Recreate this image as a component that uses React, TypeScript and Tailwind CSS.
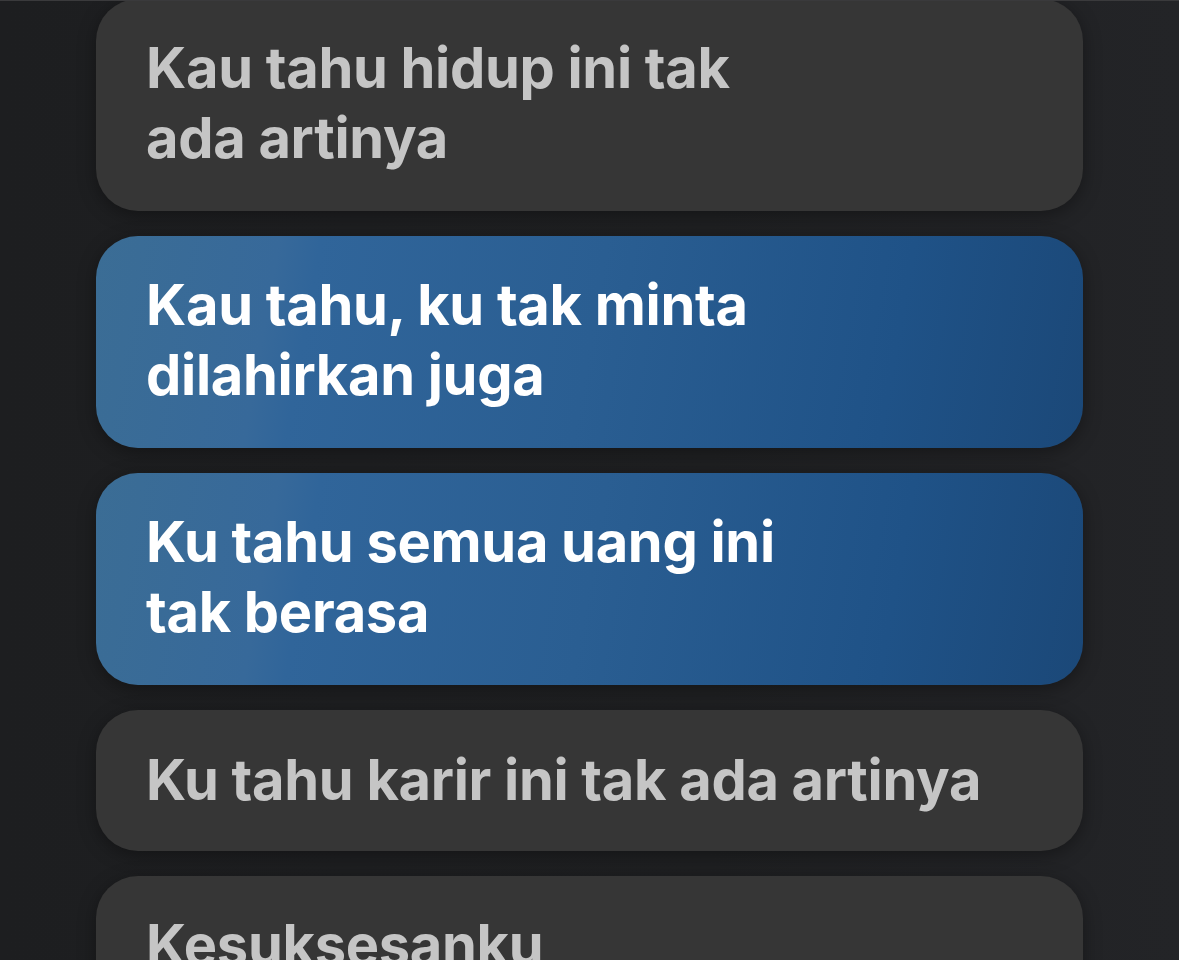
import React from 'react'

type Line = {
  lines: string[]
  active?: boolean
}

const lyrics: Line[] = [
  { lines: ['Kau tahu hidup ini tak', 'ada artinya'] },
  { lines: ['Kau tahu, ku tak minta', 'dilahirkan juga'], active: true },
  { lines: ['Ku tahu semua uang ini', 'tak berasa'], active: true },
  { lines: ['Ku tahu karir ini tak ada artinya'] },
  { lines: ['Kesuksesanku', 'dan semua yang ku punya'] },
]

function LyricCard({ lines, active }: Line) {
  const tall = lines.length > 1
  return (
    <div
      className={`rounded-[42px] px-[50px] shadow-[0_4px_18px_rgba(0,0,0,0.35)] ${
        tall ? 'h-[212px] pt-[34px]' : 'h-[141px] pt-[35px]'
      } ${
        active
          ? 'bg-[linear-gradient(100deg,#3b6d95_0%,#37699a_18%,#30659a_22%,#2a5e92_50%,#1f5287_80%,#1b4878_100%)] text-white'
          : 'bg-[#363636] text-[#c5c5c5]'
      }`}
    >
      {lines.map((l) => (
        <p key={l} className="text-[56px] leading-[70px] font-bold tracking-[-0.3px] whitespace-nowrap">
          {l}
        </p>
      ))}
    </div>
  )
}

export default function App() {
  return (
    <div
      className="relative h-[960px] w-[1179px] overflow-hidden bg-[linear-gradient(90deg,#1d1e20_0%,#1f2022_60%,#232427_100%)]"
      style={{ fontFamily: 'Inter, "Noto Sans", sans-serif' }}
    >
      <div className="mx-[96px] -mt-px flex flex-col gap-[25px]">
        {lyrics.map((l, i) => (
          <LyricCard key={i} {...l} />
        ))}
      </div>
      <div className="absolute inset-x-0 top-0 h-px bg-[#3a3a3c]" />
    </div>
  )
}
